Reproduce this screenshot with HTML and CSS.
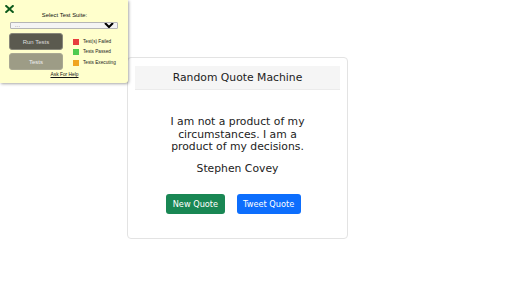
FILE: index.html
```html
<!DOCTYPE html>
<html lang="en">
<head>
    <meta charset="UTF-8">
    <meta name="viewport" content="width=device-width, initial-scale=1.0">
    <title>Random Quote Machine</title>
    <link rel="stylesheet" href="styles.css">
</head>
<body>
    <div class="page">
        <div id="quote-box" class="card">
            <div class="card-header">Random Quote Machine</div>
            <div class="card-body">
                <p id="text" class="quote-text">I am not a product of my circumstances. I am a product of my decisions.</p>
                <p id="author" class="quote-author">Stephen Covey</p>
                <div class="actions">
                    <button id="new-quote" class="btn btn-green">New Quote</button>
                    <a id="tweet-quote" class="btn btn-blue" href="#">Tweet Quote</a>
                </div>
            </div>
        </div>
    </div>

    <div class="test-panel">
        <span class="test-close">
            <svg width="9" height="8" viewBox="0 0 9 8">
                <path d="M1.2 1 L7.8 7 M7.8 1 L1.2 7" stroke="#0d5a1c" stroke-width="2" stroke-linecap="square"/>
            </svg>
        </span>
        <div class="test-label">Select Test Suite:</div>
        <select class="test-select">
            <option>- - -</option>
        </select>
        <div class="test-row">
            <div class="test-buttons">
                <button class="test-btn test-run">Run Tests</button>
                <button class="test-btn test-tests">Tests</button>
            </div>
            <ul class="test-legend">
                <li><span class="dot dot-red"></span>Test(s) Failed</li>
                <li><span class="dot dot-green"></span>Tests Passed</li>
                <li><span class="dot dot-orange"></span>Tests Executing</li>
            </ul>
        </div>
        <a class="test-help" href="#">Ask For Help</a>
    </div>
</body>
</html>
```

FILE: styles.css
```css
* {
    margin: 0;
    padding: 0;
    box-sizing: border-box;
}

body {
    font-family: "DejaVu Sans", sans-serif;
    background-color: #fff;
    color: #222;
}

.page {
    padding: 57px 0 0 127px;
}

.card {
    width: 221px;
    height: 182px;
    border: 1px solid #e3e3e3;
    border-radius: 4px;
    padding: 8px 7px;
}

.card-header {
    height: 24px;
    background-color: #f5f5f5;
    border-bottom: 1px solid #ebebeb;
    font-size: 10.8px;
    line-height: 23px;
    text-align: center;
}

.card-body {
    text-align: center;
    padding-top: 26px;
}

.quote-text {
    font-size: 10.8px;
    line-height: 12.5px;
    width: 140px;
    margin: 0 auto;
}

.quote-author {
    font-size: 10.8px;
    line-height: 12.5px;
    margin-top: 9px;
}

.actions {
    display: flex;
    justify-content: center;
    gap: 12px;
    margin-top: 19px;
    padding-right: 8px;
}

.btn {
    display: inline-block;
    height: 20px;
    padding: 0 6.5px;
    border: none;
    border-radius: 3px;
    font-family: "DejaVu Sans", sans-serif;
    font-size: 8.2px;
    line-height: 20px;
    color: #fff;
    text-decoration: none;
}

.btn-green {
    background-color: #198754;
}

.btn-blue {
    background-color: #0d6efd;
}

/* test suite panel */

.test-panel {
    position: absolute;
    top: 0;
    left: 0;
    width: 128px;
    height: 83px;
    background-color: #ffffcc;
    box-shadow: 1px 1px 3px rgba(0, 0, 0, 0.35);
    border-bottom-right-radius: 3px;
    font-family: "Liberation Sans", Arial, sans-serif;
    padding: 12px 9px 0 10px;
}

.test-close {
    position: absolute;
    top: 5px;
    left: 5px;
    line-height: 0;
}

.test-label {
    font-size: 5.9px;
    text-align: center;
    color: #111;
    line-height: 7px;
}

.test-select {
    display: block;
    width: 108px;
    height: 7px;
    margin-top: 3px;
    font-size: 3px;
    border: 1px solid #b5b5b5;
    border-radius: 1px;
    background-color: #f4f4f4;
}

.test-row {
    display: flex;
    margin-top: 4px;
}

.test-buttons {
    display: flex;
    flex-direction: column;
    gap: 3px;
    margin-left: -1px;
}

.test-btn {
    width: 54px;
    height: 17px;
    border: 1px solid #88877a;
    border-radius: 3px;
    font-family: "Liberation Sans", Arial, sans-serif;
    font-size: 6px;
    color: #ddd;
}

.test-run {
    background-color: #5b5a4f;
}

.test-tests {
    background-color: #9d9c86;
    border-color: #a9a893;
    color: #eee;
}

.test-legend {
    list-style: none;
    margin-left: 10px;
    padding-top: 4px;
}

.test-legend li {
    display: flex;
    align-items: center;
    font-size: 4.7px;
    line-height: 6px;
    height: 10.3px;
    color: #222;
}

.dot {
    display: inline-block;
    width: 6px;
    height: 6px;
    margin-right: 4px;
}

.dot-red {
    background-color: #e73d3d;
}

.dot-green {
    background-color: #4fcb4f;
}

.dot-orange {
    background-color: #f0a521;
}

.test-help {
    display: block;
    text-align: center;
    font-size: 4.85px;
    line-height: 6px;
    color: #111;
    margin-top: 2px;
}
```
